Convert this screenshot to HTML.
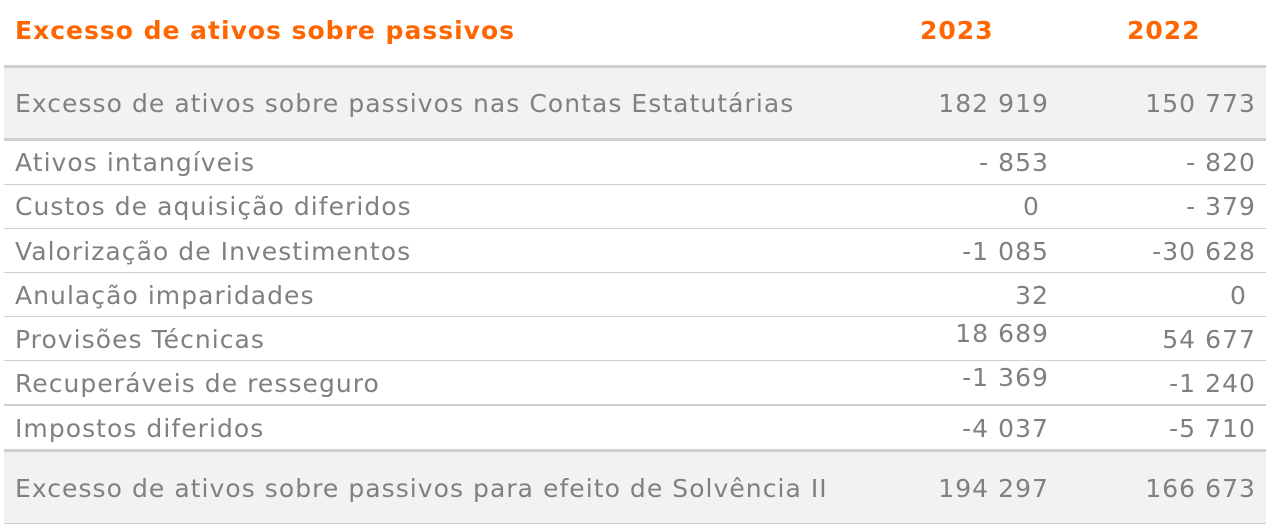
<!DOCTYPE html>
<html><head><meta charset="utf-8"><style>
body{margin:0;width:1269px;height:525px;background:#fff;position:relative;overflow:hidden;font-family:"DejaVu Sans","Liberation Sans",sans-serif;}
.t{position:absolute;white-space:nowrap;font-size:25px;letter-spacing:1.05px;color:#808080;line-height:30px;}
.h{color:#ff6600;font-weight:bold;font-size:25px;letter-spacing:1px;}
.bg{position:absolute;left:4px;width:1262px;background:#f2f2f2;}
.l{position:absolute;left:4px;width:1262px;background:#cfcfcf;}
.r1{right:220px;text-align:right}
.r2{right:13px;text-align:right}
</style></head><body>
<div class="bg" style="top:68px;height:70px"></div>
<div class="bg" style="top:452px;height:71px"></div>
<div class="l" style="top:65px;height:3px"></div>
<div class="l" style="top:138px;height:3px"></div>
<div class="l" style="top:184px;height:1px"></div>
<div class="l" style="top:228px;height:1px"></div>
<div class="l" style="top:272px;height:1px"></div>
<div class="l" style="top:316px;height:1px"></div>
<div class="l" style="top:360px;height:1px"></div>
<div class="l" style="top:404px;height:2px"></div>
<div class="l" style="top:449px;height:3px"></div>
<div class="l" style="top:523px;height:1px"></div>

<div class="t h" style="left:15px;top:16px">Excesso de ativos sobre passivos</div>
<div class="t h" style="left:920px;top:16px">2023</div>
<div class="t h" style="left:1127px;top:16px">2022</div>

<div class="t" style="left:15px;top:89px">Excesso de ativos sobre passivos nas Contas Estatutárias</div>
<div class="t r1" style="top:89px">182 919</div><div class="t r2" style="top:89px">150 773</div>

<div class="t" style="left:15px;top:148px">Ativos intangíveis</div>
<div class="t r1" style="top:148px">- 853</div><div class="t r2" style="top:148px">- 820</div>

<div class="t" style="left:15px;top:192px">Custos de aquisição diferidos</div>
<div class="t" style="right:229px;top:192px">0</div><div class="t r2" style="top:192px">- 379</div>

<div class="t" style="left:15px;top:237px">Valorização de Investimentos</div>
<div class="t r1" style="top:237px">-1 085</div><div class="t r2" style="top:237px">-30 628</div>

<div class="t" style="left:15px;top:281px">Anulação imparidades</div>
<div class="t r1" style="top:281px">32</div><div class="t" style="right:22px;top:281px">0</div>

<div class="t" style="left:15px;top:325px">Provisões Técnicas</div>
<div class="t r1" style="top:319px">18 689</div><div class="t r2" style="top:325px">54 677</div>

<div class="t" style="left:15px;top:369px">Recuperáveis de resseguro</div>
<div class="t r1" style="top:363px">-1 369</div><div class="t r2" style="top:369px">-1 240</div>

<div class="t" style="left:15px;top:414px">Impostos diferidos</div>
<div class="t r1" style="top:414px">-4 037</div><div class="t r2" style="top:414px">-5 710</div>

<div class="t" style="left:15px;top:474px">Excesso de ativos sobre passivos para efeito de Solvência II</div>
<div class="t r1" style="top:474px">194 297</div><div class="t r2" style="top:474px">166 673</div>
</body></html>
